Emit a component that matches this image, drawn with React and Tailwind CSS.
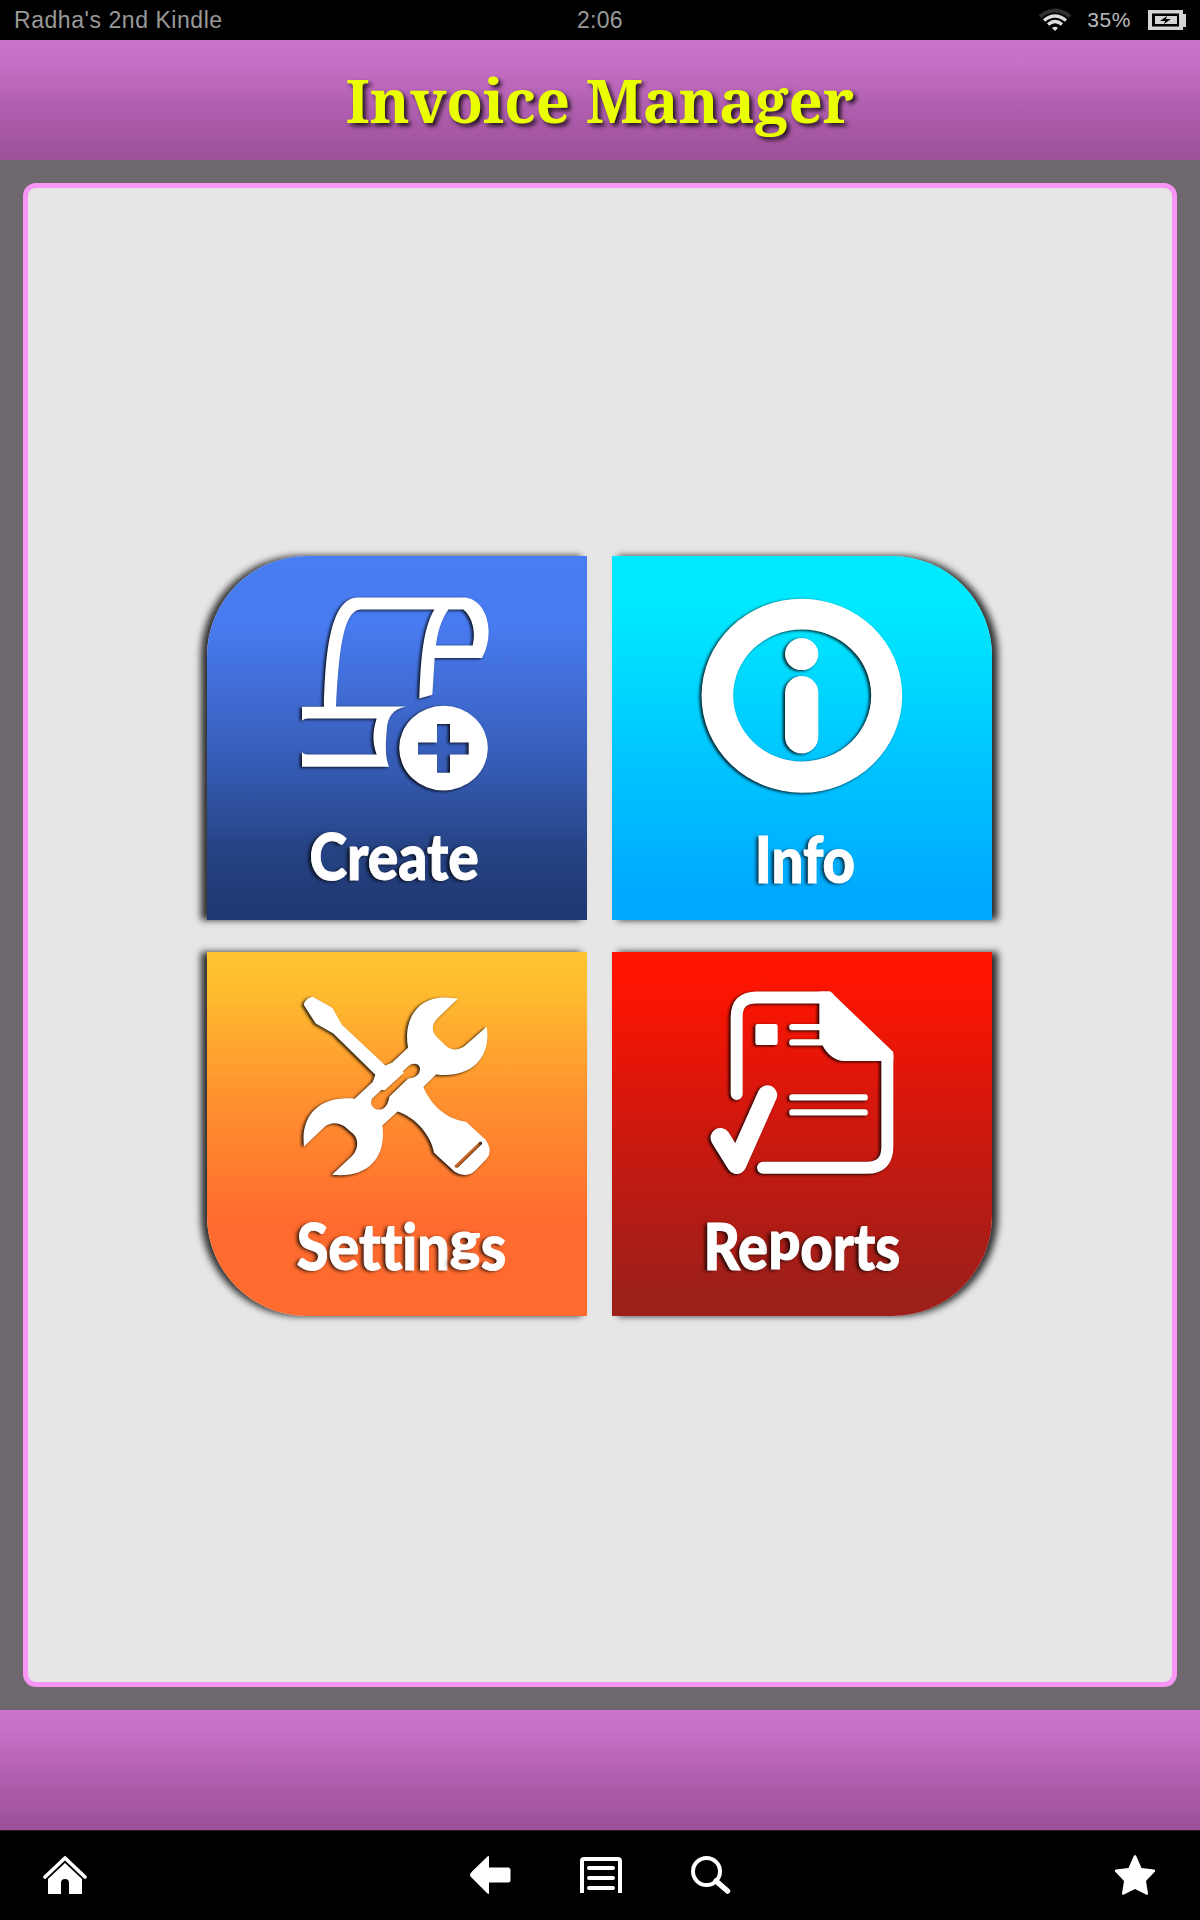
import React from "react";

const tiles = [
  {
    id: "create",
    label: "Create",
    box: "rounded-tl-[100px] shadow-[-6px_0_7px_rgba(0,0,0,0.8)] bg-[linear-gradient(180deg,#497df2_0%,#487bf0_19%,#3f6ad0_40%,#3459b0_60%,#264485_80%,#203872_97%)]",
    text: "scale-x-[0.89]",
    wrap: "pt-[268px] pr-[6px]",
    viewBox: "51 46 1140 1093",
    Icon: CreateIcon,
  },
  {
    id: "info",
    label: "Info",
    box: "rounded-tr-[100px] shadow-[6px_0_7px_rgba(0,0,0,0.8)] bg-[linear-gradient(180deg,#00ebff_0%,#00e8ff_15%,#00caff_50%,#00aaff_92%)]",
    text: "scale-x-[0.88]",
    wrap: "pt-[271px] pl-[6px]",
    viewBox: "35 46 1140 1093",
    Icon: InfoIcon,
  },
  {
    id: "settings",
    label: "Settings",
    box: "rounded-bl-[100px] shadow-[-6px_0_7px_rgba(0,0,0,0.8)] bg-[linear-gradient(180deg,#ffc42f_0%,#ffbd2f_10%,#ff942f_38%,#ff6b2f_74%)]",
    text: "scale-x-[0.9]",
    wrap: "pt-[262px] pl-2",
    viewBox: "51 50 1140 1093",
    Icon: SettingsIcon,
  },
  {
    id: "reports",
    label: "Reports",
    box: "rounded-br-[100px] shadow-[6px_0_7px_rgba(0,0,0,0.8)] bg-[linear-gradient(180deg,#ff1500_0%,#fb1402_12%,#d8170c_40%,#b01c15_75%,#9c1f1a_95%)]",
    text: "scale-x-[0.88]",
    wrap: "pt-[262px]",
    viewBox: "35 50 1140 1093",
    Icon: ReportsIcon,
  },
];

function CreateIcon() {
  return (
    <>
      <path
        fill="#fff"
        fillRule="evenodd"
        d="M336 498H402C406 330 422 173 502 170H826C890 178 918 274 876 352H734L727 462L688 473C692 370 696 268 733 206H512C458 208 446 340 438 497H648C608 505 592 528 590 570C586 625 586 650 597 678H336V634Q340 641 352 641H560C546 606 548 570 560 533H354Q342 533 336 540ZM775 206H820C848 228 858 276 848 314H738C742 278 752 240 775 206Z"
      />
      <path
        fill="#fff"
        fillRule="evenodd"
        d="M761 495A133 127 0 1 1 760 749A133 127 0 1 1 761 495ZM741 550V605H684V641H741V696H780V641H836V605H780V550Z"
      />
    </>
  );
}

function InfoIcon() {
  return (
    <>
      <path
        fill="#fff"
        fillRule="evenodd"
        d="M605 174A301 291 0 1 1 604 756A301 291 0 1 1 605 174ZM605 266A207 198 0 1 0 606 662A207 198 0 1 0 605 266Z"
      />
      <ellipse cx="604" cy="340" rx="50" ry="48" fill="#fff" />
      <rect x="554" y="406" width="100" height="232" rx="50" fill="#fff" />
    </>
  );
}

function SettingsIcon() {
  return (
    <path
      fill="#fff"
      fillRule="evenodd"
      d="M341 208Q347 187 368 184L427 217L455 267L586 390L606 382L654 337C638 245 690 180 776 187L804 189L742 249C720 272 728 295 742 306L768 332C784 346 806 346 824 332L890 274C905 365 845 430 738 417L700 455C722 508 768 552 828 559L886 612Q910 644 890 670L856 705Q828 730 795 710L732 652C724 600 676 545 623 528L577 570C590 665 535 730 426 718L486 662C506 640 506 612 490 596L462 572C444 560 420 560 404 574L342 633C330 535 395 480 494 490L548 440L556 418L430 294L377 264ZM638 408L652 395C666 380 686 382 690 398C690 420 674 428 654 430L598 484C594 510 582 526 562 522C544 518 538 500 548 488L574 464H585L642 412ZM794 690Q792 698 803 697L876 626Q878 617 869 619Z"
    />
  );
}

function ReportsIcon() {
  return (
    <g fill="none" stroke="#fff" strokeLinecap="round">
      <path strokeWidth="36" d="M409 476V245Q409 186 468 186H684" strokeLinejoin="round" />
      <path strokeWidth="36" d="M861 360V634Q861 697 800 697H488" />
      <path
        fill="#fff"
        stroke="none"
        d="M657 168H690L879 350V377H732C704 377 678 354 667 330Q657 322 657 310Z"
      />
      <rect x="465" y="266" width="67" height="63" rx="7" fill="#fff" stroke="none" />
      <path strokeWidth="19" d="M576 275H665M576 321H665M576 486H793M576 531H793" />
      <path strokeWidth="59" strokeLinejoin="round" d="M360 607L409 686L501 479" />
    </g>
  );
}

// descending letters are shrunk so they rest on the baseline
function Label({ text }) {
  return text.split(/([gp])/).map((part, i) =>
    part === "g" || part === "p" ? (
      <span
        key={i}
        className="relative -top-[10px] mx-[3px] inline-block scale-x-[1.2] text-[53px] leading-none"
      >
        {part}
      </span>
    ) : (
      part
    )
  );
}

function Tile({ tile }) {
  const { Icon } = tile;
  return (
    <button className={`relative block h-[364.5px] w-[380px] ${tile.box}`}>
      <svg
        viewBox={tile.viewBox}
        className="absolute inset-0 h-full w-full [filter:drop-shadow(-2px_1px_1.5px_rgba(0,0,0,0.85))]"
      >
        <Icon />
      </svg>
      <div className={`flex h-full items-start justify-center ${tile.wrap}`}>
        <span
          className={`inline-block whitespace-nowrap font-['Lato',sans-serif] text-[64px] leading-[64px] font-black text-white [font-variant-ligatures:none] [-webkit-text-stroke:1px_white] [text-shadow:-3px_1px_4px_rgba(0,0,0,0.8)] ${tile.text}`}
        >
          <Label text={tile.label} />
        </span>
      </div>
    </button>
  );
}

function StatusBar() {
  return (
    <div className="grid h-10 grid-cols-3 items-center bg-black pr-[14px] pl-[14px] font-['Liberation_Sans',Arial,sans-serif] text-[23px] text-[#999]">
      <span className="tracking-[0.55px]">Radha's 2nd Kindle</span>
      <span className="text-center tracking-[0.3px]">2:06</span>
      <div className="flex items-center justify-end">
        <svg width="34" height="24" viewBox="0 0 34 24" fill="none">
          <path d="M2 8.500Q17 -3.500 32 8.500" stroke="#303030" strokeWidth="4" />
          <path d="M6 12.500Q17 3.500 28 12.500" stroke="#ddd" strokeWidth="3.200" />
          <path d="M10 16.500Q17 10.500 24 16.500" stroke="#ddd" strokeWidth="3.200" />
          <path d="M14 20Q17 17.500 20 20L17 23Z" fill="#ddd" />
        </svg>
        <span className="ml-[15px] text-[21px] tracking-[0.6px] text-[#bbb]">35%</span>
        <svg width="38" height="20" viewBox="0 0 38 20" className="ml-[17px]">
          <path
            fill="#d4d4d4"
            fillRule="evenodd"
            d="M0 0H35V4H38V17H35V20H0ZM4 3.500V16.500H31V3.500Z"
          />
          <path fill="#d4d4d4" d="M7 6H29V14H7Z" />
          <path fill="#000" d="M19 6L12 11H17L16 14L23 9H18Z" />
        </svg>
      </div>
    </div>
  );
}

function NavBar() {
  return (
    <div className="grid h-[90px] grid-cols-3 items-center border-t border-[#222] bg-black pr-[45px] pb-[2px] pl-[43px]">
      <svg width="44" height="40" viewBox="0 0 44 40" fill="#fff">
        <path d="M2 22L22 3L42 22" fill="none" stroke="#fff" strokeWidth="3.600" strokeLinecap="round" strokeLinejoin="round" />
        <path d="M22 8L39 24V39H26V28Q26 24 22 24Q18 24 18 28V39H5V24Z" />
      </svg>
      <div className="flex items-center justify-center gap-[69px] pl-[4px]">
        <svg width="41" height="40" viewBox="0 0 41 40" fill="#fff">
          <path d="M0 20Q0 18.500 2 16.500L17 2Q19 0 19 2V12.500H38Q40.500 12.500 40.500 15V25Q40.500 27.500 38 27.500H19V38Q19 40 17 38L2 23Q0 21.500 0 20Z" />
        </svg>
        <svg width="42" height="36" viewBox="0 0 42 36" fill="none" stroke="#fff" strokeWidth="4">
          <path d="M2 36V4Q2 2 4 2H38Q40 2 40 4V36" />
          <path d="M9 11H33M9 21H33M9 31H33" strokeLinecap="round" />
        </svg>
        <svg width="40" height="38" viewBox="0 0 40 38" fill="none" stroke="#fff">
          <circle cx="15.500" cy="15.500" r="13.500" strokeWidth="4" />
          <path d="M25 25L36.500 35" strokeWidth="5.500" strokeLinecap="round" />
        </svg>
      </div>
      <svg width="40" height="40" viewBox="0 0 40 40" fill="#fff" className="justify-self-end">
        <path d="M20 0Q21 0 21.500 1.500L26.500 13L39 14.500Q41 15 39.500 17L31 26L33 38.500Q33 40.500 31 39.500L20 34L9 39.500Q7 40.500 7 38.500L9 26L.5 17Q-1 15 1 14.500L13.500 13L18.500 1.500Q19 0 20 0Z" />
      </svg>
    </div>
  );
}

export default function App() {
  return (
    <div className="flex h-[1920px] w-[1200px] flex-col overflow-hidden bg-[#6f686f]">
      <StatusBar />
      <header className="flex h-[120px] items-center justify-center bg-[linear-gradient(180deg,#cc73cb_0%,#c86fc7_18%,#ae5ead_58%,#9d5199_98%)]">
        <h1 className="whitespace-nowrap font-['Noto_Serif','Droid_Serif','DejaVu_Serif_Condensed','DejaVu_Serif',serif] text-[60px] leading-none font-bold text-[#eaff00] [text-shadow:3px_3px_4px_rgba(0,0,0,0.8)]">
          Invoice Manager
        </h1>
      </header>
      <main className="flex flex-1 p-[23px]">
        <div className="flex flex-1 items-center justify-center rounded-[13px] border-[5px] border-[#f896f3] bg-[#e6e6e6] pt-[2px] pr-[1px]">
          <div className="grid grid-cols-2 gap-x-[25px] gap-y-[31.500px]">
            {tiles.map((tile) => (
              <Tile key={tile.id} tile={tile} />
            ))}
          </div>
        </div>
      </main>
      <footer className="h-[120px] bg-[linear-gradient(180deg,#cc73cb_0%,#c86fc7_18%,#ae5ead_58%,#9d5199_98%)]" />
      <NavBar />
    </div>
  );
}
